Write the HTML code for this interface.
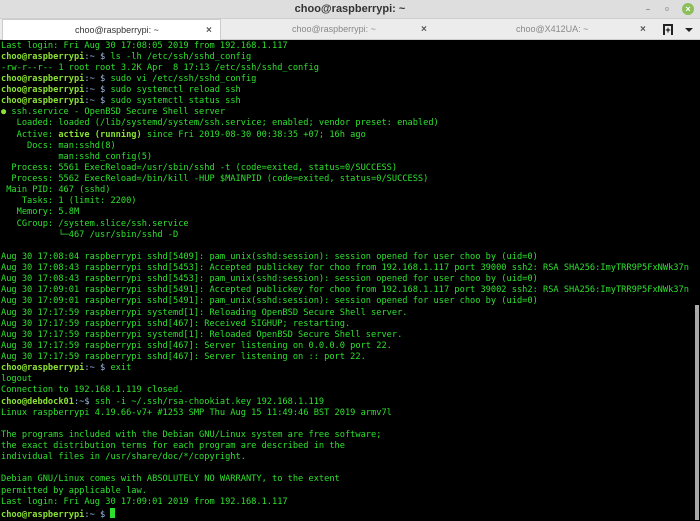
<!DOCTYPE html>
<html><head><meta charset="utf-8"><style>
*{margin:0;padding:0;box-sizing:border-box}
body{width:700px;height:520px;overflow:hidden;background:#000;position:relative;font-family:"Liberation Sans",sans-serif}
#title{position:absolute;left:0;top:0;width:700px;height:19px;background:#dedede;border-bottom:1px solid #cfcfcf}
#title .t{position:absolute;left:0;width:700px;top:3px;text-align:center;font-size:11px;font-weight:bold;color:#333}
#tabs{position:absolute;left:0;top:19px;width:700px;height:21px;background:#ececec;border-bottom:1px solid #cdcdcd}
.tab{position:absolute;top:0;height:21px;font-size:9px;color:#888;line-height:21px}
.tab .x{position:absolute;top:0;font-size:10px;color:#555;font-weight:bold}
#term{position:absolute;left:1px;top:40.5px;font-family:"DejaVu Sans Mono","Liberation Mono",monospace;font-size:8.67px;line-height:11.12px;color:#2ee02e;white-space:pre}
.p{color:#8ae234;font-weight:bold}
.b{color:#9cb8e0}
.g{color:#8ae234;font-weight:bold}
#sb{position:absolute;left:695px;top:305px;width:4px;height:215px;background:#aaa}
.cur{display:inline-block;width:5px;height:10px;background:#2ee02e;vertical-align:-1px}
</style></head><body>
<div id="title"><div class="t">choo@raspberrypi: ~</div>
<div style="position:absolute;left:646px;top:9px;width:4px;height:1px;background:#999"></div>
<div style="position:absolute;left:665px;top:7px;width:4px;height:4px;border:1px solid #aaa;border-radius:50%"></div>
<div style="position:absolute;left:682px;top:3px;width:12px;height:12px;border-radius:50%;background:#8cbf5a;color:#fff;font-size:9px;line-height:12px;text-align:center;font-weight:bold">×</div>
</div>
<div id="tabs">
<div class="tab" style="left:2px;width:219px;background:#fff;border:1px solid #ccc;border-bottom:none;color:#333"><span style="position:absolute;left:72px">choo@raspberrypi: ~</span><span class="x" style="left:203px">×</span></div>
<div class="tab" style="left:222px;width:228px"><span style="position:absolute;left:70px">choo@raspberrypi: ~</span><span class="x" style="left:199px">×</span></div>
<div class="tab" style="left:450px;width:210px"><span style="position:absolute;left:66px">choo@X412UA: ~</span><span class="x" style="left:190px">×</span></div>
<div style="position:absolute;left:663px;top:5px;width:10px;height:11px;border:2px solid #222;border-bottom:none;font-size:9px;line-height:9px;text-align:center;font-weight:bold">+</div>
<div style="position:absolute;left:685px;top:9px;width:0;height:0;border-left:4px solid transparent;border-right:4px solid transparent;border-top:4px solid #222"></div>
</div>
<div id="term">Last login: Fri Aug 30 17:08:05 2019 from 192.168.1.117
<span class="p">choo@raspberrypi</span><span class="b">:~ $</span> ls -lh /etc/ssh/sshd_config
-rw-r--r-- 1 root root 3.2K Apr  8 17:13 /etc/ssh/sshd_config
<span class="p">choo@raspberrypi</span><span class="b">:~ $</span> sudo vi /etc/ssh/sshd_config
<span class="p">choo@raspberrypi</span><span class="b">:~ $</span> sudo systemctl reload ssh
<span class="p">choo@raspberrypi</span><span class="b">:~ $</span> sudo systemctl status ssh
<span class="g">●</span> ssh.service - OpenBSD Secure Shell server
   Loaded: loaded (/lib/systemd/system/ssh.service; enabled; vendor preset: enabled)
   Active: <span class="g">active (running)</span> since Fri 2019-08-30 00:38:35 +07; 16h ago
     Docs: man:sshd(8)
           man:sshd_config(5)
  Process: 5561 ExecReload=/usr/sbin/sshd -t (code=exited, status=0/SUCCESS)
  Process: 5562 ExecReload=/bin/kill -HUP $MAINPID (code=exited, status=0/SUCCESS)
 Main PID: 467 (sshd)
    Tasks: 1 (limit: 2200)
   Memory: 5.8M
   CGroup: /system.slice/ssh.service
           └─467 /usr/sbin/sshd -D

Aug 30 17:08:04 raspberrypi sshd[5409]: pam_unix(sshd:session): session opened for user choo by (uid=0)
Aug 30 17:08:43 raspberrypi sshd[5453]: Accepted publickey for choo from 192.168.1.117 port 39000 ssh2: RSA SHA256:ImyTRR9P5FxNWk37n
Aug 30 17:08:43 raspberrypi sshd[5453]: pam_unix(sshd:session): session opened for user choo by (uid=0)
Aug 30 17:09:01 raspberrypi sshd[5491]: Accepted publickey for choo from 192.168.1.117 port 39002 ssh2: RSA SHA256:ImyTRR9P5FxNWk37n
Aug 30 17:09:01 raspberrypi sshd[5491]: pam_unix(sshd:session): session opened for user choo by (uid=0)
Aug 30 17:17:59 raspberrypi systemd[1]: Reloading OpenBSD Secure Shell server.
Aug 30 17:17:59 raspberrypi sshd[467]: Received SIGHUP; restarting.
Aug 30 17:17:59 raspberrypi systemd[1]: Reloaded OpenBSD Secure Shell server.
Aug 30 17:17:59 raspberrypi sshd[467]: Server listening on 0.0.0.0 port 22.
Aug 30 17:17:59 raspberrypi sshd[467]: Server listening on :: port 22.
<span class="p">choo@raspberrypi</span><span class="b">:~ $</span> exit
logout
Connection to 192.168.1.119 closed.
<span class="p">choo@debdock01</span><span class="b">:~$</span> ssh -i ~/.ssh/rsa-chookiat.key 192.168.1.119
Linux raspberrypi 4.19.66-v7+ #1253 SMP Thu Aug 15 11:49:46 BST 2019 armv7l

The programs included with the Debian GNU/Linux system are free software;
the exact distribution terms for each program are described in the
individual files in /usr/share/doc/*/copyright.

Debian GNU/Linux comes with ABSOLUTELY NO WARRANTY, to the extent
permitted by applicable law.
Last login: Fri Aug 30 17:09:01 2019 from 192.168.1.117
<span class="p">choo@raspberrypi</span><span class="b">:~ $</span> <span class="cur"></span></div>
<div id="sb"></div>
</body></html>
